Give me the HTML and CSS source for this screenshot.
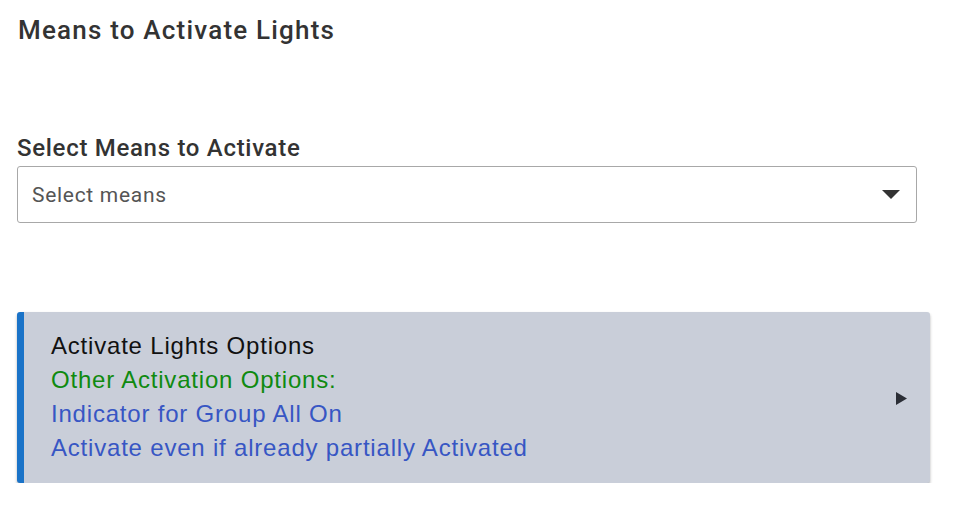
FILE: index.html
```html
<!DOCTYPE html>
<html>
<head>
<meta charset="utf-8">
<link rel="stylesheet" href="styles.css">
</head>
<body>
<div class="page">
  <h1 class="title">Means to Activate Lights</h1>
  <div class="field">
    <label class="label">Select Means to Activate</label>
    <div class="select">
      <span class="placeholder">Select means</span>
      <svg class="caret" width="18" height="9" viewBox="0 0 18 9"><path d="M0 0 H18 L9 9 Z" fill="#333"/></svg>
    </div>
  </div>
  <div class="card">
    <div class="card-text">
      <div class="line-main">Activate Lights Options</div>
      <div class="line-green">Other Activation Options:</div>
      <div class="line-blue">Indicator for Group All On</div>
      <div class="line-blue">Activate even if already partially Activated</div>
    </div>
    <svg class="arrow" width="11" height="13" viewBox="0 0 11 13"><path d="M0 0 L11 6.5 L0 13 Z" fill="#2b2e36"/></svg>
  </div>
</div>
</body>
</html>
```
FILE: styles.css
```css
html, body {
  margin: 0;
  padding: 0;
  background: #fff;
}
.page {
  padding: 13px 26px 0 17px;
  width: 913px;
  box-sizing: content-box;
  font-family: Roboto, "Liberation Sans", sans-serif;
}
.title {
  margin: 0 0 0 1px;
  font-size: 26px;
  font-weight: 500;
  letter-spacing: 1.2px;
  color: #333;
  line-height: 34px;
}
.field {
  margin-top: 87px;
  width: 900px;
}
.label {
  display: block;
  font-size: 24px;
  font-weight: 500;
  letter-spacing: 0.7px;
  color: #333;
  line-height: 28px;
  margin-bottom: 4px;
}
.select {
  height: 57px;
  box-sizing: border-box;
  border: 1px solid #a8a8a8;
  border-radius: 3px;
  display: flex;
  align-items: center;
  justify-content: space-between;
  padding: 0 16px 0 14px;
}
.placeholder {
  font-size: 21px;
  letter-spacing: 0.7px;
  color: #555;
}
.caret {
  display: block;
}
.card {
  margin-top: 89px;
  width: 913px;
  height: 171px;
  box-sizing: border-box;
  background: #c9ced9;
  border-left: 7px solid #1a73c8;
  border-radius: 3px;
  box-shadow: 0 2px 3px rgba(0,0,0,0.3);
  display: flex;
  align-items: center;
  justify-content: space-between;
  padding: 0 23px 0 27px;
  font-family: "Liberation Sans", Arial, sans-serif;
  font-size: 24px;
  letter-spacing: 0.8px;
  line-height: 34px;
}
.card-text {
  padding-bottom: 1px;
}
.line-main { color: #111; }
.line-green { color: #0f8a10; }
.line-blue { color: #3756c4; }
.arrow {
  display: block;
  margin-top: 2px;
}
```
